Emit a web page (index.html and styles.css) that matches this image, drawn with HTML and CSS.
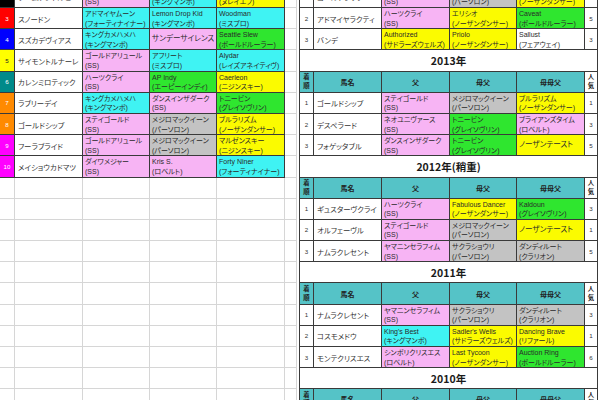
FILE: index.html
```html
<!DOCTYPE html>
<html lang="ja">
<head>
<meta charset="utf-8">
<link rel="stylesheet" href="styles.css">
</head>
<body>
<div class="sheet">
  <div class="left">
    <div class="no bk">2</div><div class="nm">デニムアンドルビー</div><div class="c pk">ディープインパクト<br>(SS)</div><div class="c cy">キングカメハメハ<br>(キングマンボ)</div><div class="c ye">Zafonic<br>(ヌレイエフ)</div><div class="g"></div>
    <div class="no rd">3</div><div class="nm">スノードン</div><div class="c cy">アドマイヤムーン<br>(フォーティナイナー)</div><div class="c cy">Lemon Drop Kid<br>(キングマンボ)</div><div class="c cy">Woodman<br>(ミスプロ)</div><div class="g"></div>
    <div class="no bl">4</div><div class="nm">スズカデヴィアス</div><div class="c cy">キングカメハメハ<br>(キングマンボ)</div><div class="c pk one">サンデーサイレンス</div><div class="c gr">Seattle Slew<br>(ボールドルーラー)</div><div class="g"></div>
    <div class="no yl">5</div><div class="nm">サイモントルナーレ</div><div class="c pk">ゴールドアリュール<br>(SS)</div><div class="c cy">アフリート<br>(ミスプロ)</div><div class="c cy">Alydar<br>(レイズアネイティヴ)</div><div class="g"></div>
    <div class="no tl">6</div><div class="nm">カレンミロティック</div><div class="c pk">ハーツクライ<br>(SS)</div><div class="c gr">AP Indy<br>(エーピーインディ)</div><div class="c ye">Caerleon<br>(ニジンスキー)</div><div class="g"></div>
    <div class="no or">7</div><div class="nm">ラブリーデイ</div><div class="c cy">キングカメハメハ<br>(キングマンボ)</div><div class="c pk">ダンスインザダーク<br>(SS)</div><div class="c gr">トニービン<br>(グレイソヴリン)</div><div class="g"></div>
    <div class="no or">8</div><div class="nm">ゴールドシップ</div><div class="c pk">ステイゴールド<br>(SS)</div><div class="c gy">メジロマックイーン<br>(パーソロン)</div><div class="c ye">ブルラリズム<br>(ノーザンダンサー)</div><div class="g"></div>
    <div class="no mg">9</div><div class="nm">フーラブライド</div><div class="c pk">ゴールドアリュール<br>(SS)</div><div class="c gy">メジロマックイーン<br>(パーソロン)</div><div class="c ye">マルゼンスキー<br>(ニジンスキー)</div><div class="g"></div>
    <div class="no mg">10</div><div class="nm">メイショウカドマツ</div><div class="c pk">ダイワメジャー<br>(SS)</div><div class="c pk">Kris S.<br>(ロベルト)</div><div class="c cy">Forty Niner<br>(フォーティナイナー)</div><div class="g"></div>
    <div class="e"></div><div class="e"></div><div class="e"></div><div class="e"></div><div class="e"></div><div class="e"></div>
    <div class="e"></div><div class="e"></div><div class="e"></div><div class="e"></div><div class="e"></div><div class="e"></div>
    <div class="e"></div><div class="e"></div><div class="e"></div><div class="e"></div><div class="e"></div><div class="e"></div>
    <div class="e"></div><div class="e"></div><div class="e"></div><div class="e"></div><div class="e"></div><div class="e"></div>
    <div class="e"></div><div class="e"></div><div class="e"></div><div class="e"></div><div class="e"></div><div class="e"></div>
    <div class="e"></div><div class="e"></div><div class="e"></div><div class="e"></div><div class="e"></div><div class="e"></div>
    <div class="e"></div><div class="e"></div><div class="e"></div><div class="e"></div><div class="e"></div><div class="e"></div>
    <div class="e"></div><div class="e"></div><div class="e"></div><div class="e"></div><div class="e"></div><div class="e"></div>
    <div class="e"></div><div class="e"></div><div class="e"></div><div class="e"></div><div class="e"></div><div class="e"></div>
    <div class="e"></div><div class="e"></div><div class="e"></div><div class="e"></div><div class="e"></div><div class="e"></div>
    <div class="e"></div><div class="e"></div><div class="e"></div><div class="e"></div><div class="e"></div><div class="e"></div>
  </div>

  <div class="right">
    <div class="rk">1</div><div class="nm">ゴールドシップ</div><div class="c pk">ステイゴールド<br>(SS)</div><div class="c gy">メジロマックイーン<br>(パーソロン)</div><div class="c ye">ブルラリズム<br>(ノーザンダンサー)</div><div class="rk">1</div>
    <div class="rk">2</div><div class="nm">アドマイヤラクティ</div><div class="c pk">ハーツクライ<br>(SS)</div><div class="c ye">エリシオ<br>(ノーザンダンサー)</div><div class="c gr">Caveat<br>(ボールドルーラー)</div><div class="rk">5</div>
    <div class="rk">3</div><div class="nm">バンデ</div><div class="c ye">Authorized<br>(サドラーズウェルズ)</div><div class="c ye">Priolo<br>(ノーザンダンサー)</div><div class="c">Sallust<br>(フェアウェイ)</div><div class="rk">3</div>

    <div class="title">2013年</div>
    <div class="hd v">着<br>順</div><div class="hd">馬名</div><div class="hd">父</div><div class="hd">母父</div><div class="hd">母母父</div><div class="hd v wh">人<br>気</div>
    <div class="rk">1</div><div class="nm">ゴールドシップ</div><div class="c pk">ステイゴールド<br>(SS)</div><div class="c gy">メジロマックイーン<br>(パーソロン)</div><div class="c ye">ブルラリズム<br>(ノーザンダンサー)</div><div class="rk">1</div>
    <div class="rk">2</div><div class="nm">デスペラード</div><div class="c pk">ネオユニヴァース<br>(SS)</div><div class="c gr">トニービン<br>(グレイソヴリン)</div><div class="c pk">ブライアンズタイム<br>(ロベルト)</div><div class="rk">3</div>
    <div class="rk">3</div><div class="nm">フォゲッタブル</div><div class="c pk">ダンスインザダーク<br>(SS)</div><div class="c gr">トニービン<br>(グレイソヴリン)</div><div class="c ye one">ノーザンテースト</div><div class="rk">5</div>

    <div class="title">2012年(稍重)</div>
    <div class="hd v">着<br>順</div><div class="hd">馬名</div><div class="hd">父</div><div class="hd">母父</div><div class="hd">母母父</div><div class="hd v wh">人<br>気</div>
    <div class="rk">1</div><div class="nm">ギュスターヴクライ</div><div class="c pk">ハーツクライ<br>(SS)</div><div class="c ye">Fabulous Dancer<br>(ノーザンダンサー)</div><div class="c gr">Kaldoun<br>(グレイソヴリン)</div><div class="rk">3</div>
    <div class="rk">2</div><div class="nm">オルフェーヴル</div><div class="c pk">ステイゴールド<br>(SS)</div><div class="c gy">メジロマックイーン<br>(パーソロン)</div><div class="c ye one">ノーザンテースト</div><div class="rk">1</div>
    <div class="rk">3</div><div class="nm">ナムラクレセント</div><div class="c pk">ヤマニンセラフィム<br>(SS)</div><div class="c gy">サクラショウリ<br>(パーソロン)</div><div class="c gy">ダンディルート<br>(クラリオン)</div><div class="rk">5</div>

    <div class="title">2011年</div>
    <div class="hd v">着<br>順</div><div class="hd">馬名</div><div class="hd">父</div><div class="hd">母父</div><div class="hd">母母父</div><div class="hd v wh">人<br>気</div>
    <div class="rk">1</div><div class="nm">ナムラクレセント</div><div class="c pk">ヤマニンセラフィム<br>(SS)</div><div class="c gy">サクラショウリ<br>(パーソロン)</div><div class="c gy">ダンディルート<br>(クラリオン)</div><div class="rk">3</div>
    <div class="rk">2</div><div class="nm">コスモメドウ</div><div class="c cy">King's Best<br>(キングマンボ)</div><div class="c ye">Sadler's Wells<br>(サドラーズウェルズ)</div><div class="c ye">Dancing Brave<br>(リファール)</div><div class="rk">1</div>
    <div class="rk">3</div><div class="nm">モンテクリスエス</div><div class="c pk">シンボリクリスエス<br>(ロベルト)</div><div class="c ye">Last Tycoon<br>(ノーザンダンサー)</div><div class="c gr">Auction Ring<br>(ボールドルーラー)</div><div class="rk">6</div>

    <div class="title">2010年</div>
    <div class="hd v">着<br>順</div><div class="hd">馬名</div><div class="hd">父</div><div class="hd">母父</div><div class="hd">母母父</div><div class="hd v wh">人<br>気</div>
  </div>
</div>
</body>
</html>
```

FILE: styles.css
```css
html, body {
  margin: 0;
  padding: 0;
  background: #ffffff;
  overflow: hidden;
}

body {
  width: 600px;
  height: 400px;
  font-family: "Liberation Sans Narrow", "Liberation Sans", "Noto Sans CJK JP", sans-serif;
  font-feature-settings: "palt";
  color: #222;
}

.sheet {
  display: flex;
  align-items: flex-start;
  margin-top: -13.2px;
}

.left {
  display: grid;
  grid-template-columns: 15px 68px 67px 67px 68px 12px;
  grid-auto-rows: 21.2px;
  width: 297px;
  flex: none;
}

.right {
  display: grid;
  grid-template-columns: 14px 68px 68px 67px 68px 13px;
  grid-auto-rows: 21.2px;
  margin-left: 2px;
  border-left: 1px solid #3a3a3a;
  flex: none;
}

.left > div,
.right > div {
  box-sizing: border-box;
  border-right: 1px solid #3a3a3a;
  border-bottom: 1px solid #3a3a3a;
  overflow: hidden;
  white-space: nowrap;
}

.c {
  padding: 1px 0 0 2px;
  font-size: 7px;
  line-height: 9.6px;
  color: #2a2a2a;
  background: #ffffff;
}

.c.one {
  display: flex;
  align-items: center;
  padding-top: 0;
  font-size: 7.6px;
}

.nm {
  display: flex;
  align-items: center;
  padding-left: 3px;
  font-size: 7.4px;
  color: #333;
  background: #fff;
}

.no {
  display: flex;
  align-items: center;
  justify-content: center;
  font-size: 6.2px;
  color: #fff;
}

.rk {
  display: flex;
  align-items: center;
  justify-content: center;
  font-size: 6.2px;
  color: #333;
  background: #fff;
}

.left > .g,
.left > .e {
  border-right: 1px solid #d6d6d6;
  border-bottom: 1px solid #d6d6d6;
  background: #fff;
}

.title {
  grid-column: 1 / -1;
  display: flex;
  align-items: center;
  justify-content: center;
  font-family: "Noto Sans CJK JP", sans-serif;
  font-weight: bold;
  font-size: 10.5px;
  color: #1a1a1a;
  background: #fff;
}

.hd {
  display: flex;
  align-items: center;
  justify-content: center;
  font-family: "Noto Sans CJK JP", sans-serif;
  font-weight: bold;
  font-size: 7px;
  color: #222;
  background: #55c3c7;
}

.hd.v {
  font-size: 6.4px;
  line-height: 8.4px;
  text-align: center;
}

.hd.wh {
  background: #fff;
}

/* cell fills */
.pk { background: #f7b4f4; }
.cy { background: #3ff3f3; }
.gr { background: #2fe62f; }
.ye { background: #fbfb00; }
.gy { background: #c3c3c3; }

/* frame colours */
.bk { background: #000000; }
.rd { background: #ff0000; }
.bl { background: #0000ff; }
.yl { background: #ffff00; color: #222 !important; }
.tl { background: #008a8a; }
.or { background: #ff8a00; }
.mg { background: #ff00ff; }
```
